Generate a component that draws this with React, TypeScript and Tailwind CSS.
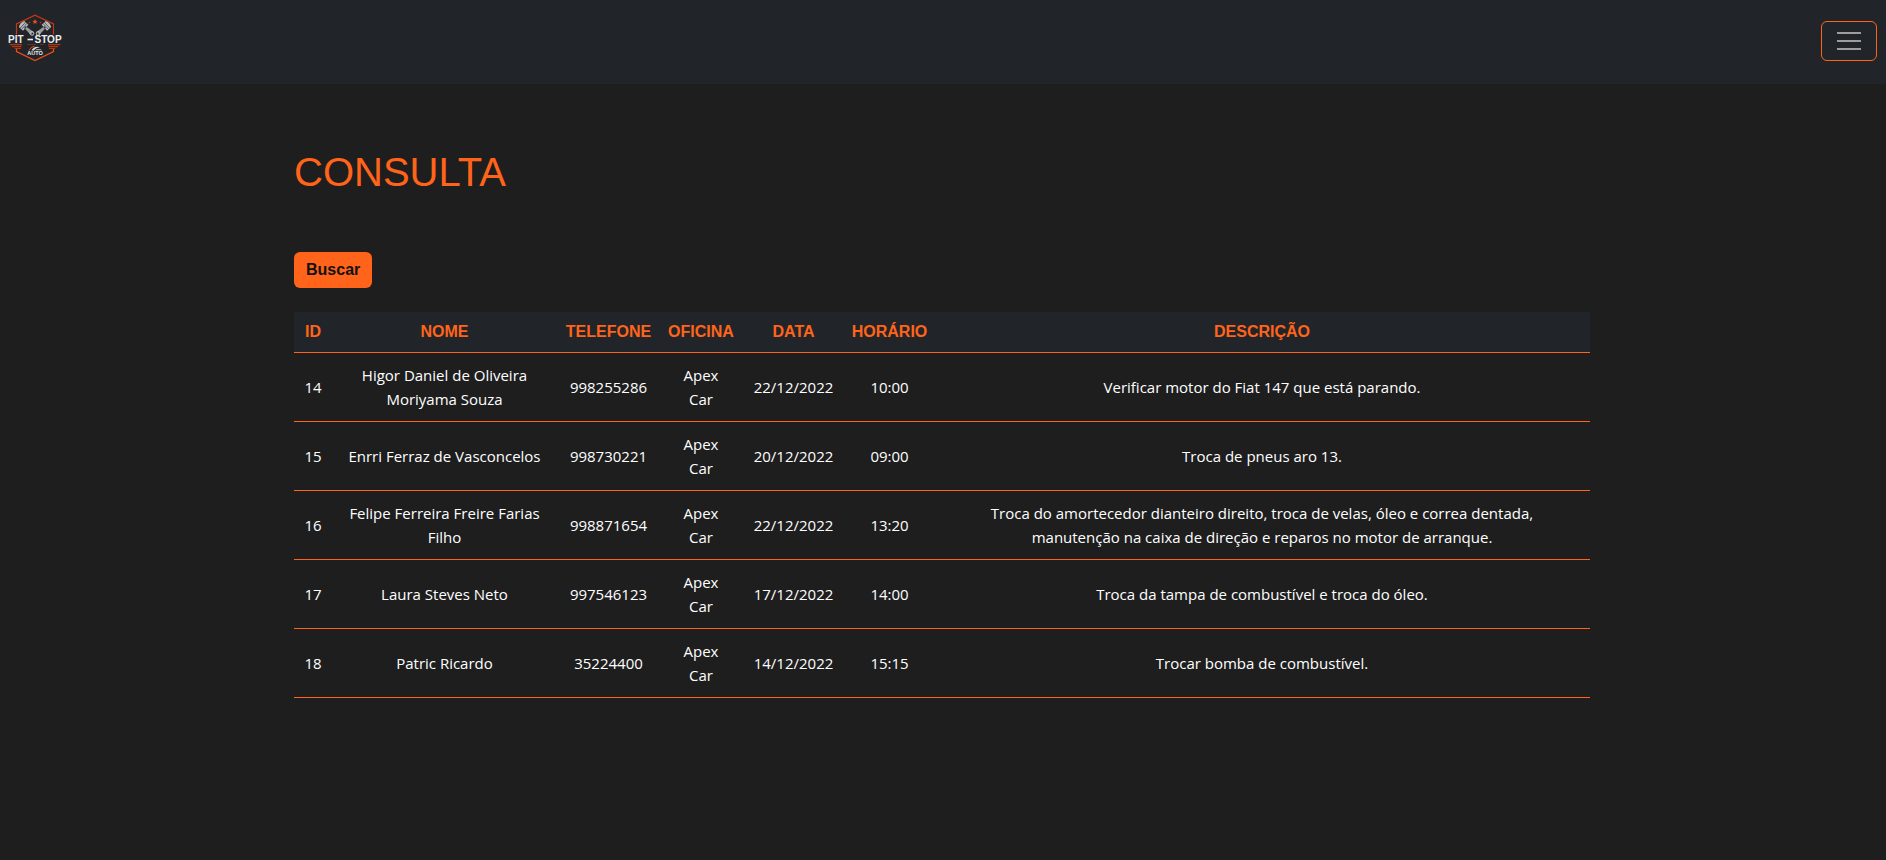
type Booking = {
  id: number;
  name: string;
  phone: string;
  shop: string;
  date: string;
  time: string;
  description: string;
};

const bookings: Booking[] = [
  { id: 14, name: "Higor Daniel de Oliveira Moriyama Souza", phone: "998255286", shop: "Apex Car", date: "22/12/2022", time: "10:00", description: "Verificar motor do Fiat 147 que está parando." },
  { id: 15, name: "Enrri Ferraz de Vasconcelos", phone: "998730221", shop: "Apex Car", date: "20/12/2022", time: "09:00", description: "Troca de pneus aro 13." },
  { id: 16, name: "Felipe Ferreira Freire Farias Filho", phone: "998871654", shop: "Apex Car", date: "22/12/2022", time: "13:20", description: "Troca do amortecedor dianteiro direito, troca de velas, óleo e correa dentada, manutenção na caixa de direção e reparos no motor de arranque." },
  { id: 17, name: "Laura Steves Neto", phone: "997546123", shop: "Apex Car", date: "17/12/2022", time: "14:00", description: "Troca da tampa de combustível e troca do óleo." },
  { id: 18, name: "Patric Ricardo", phone: "35224400", shop: "Apex Car", date: "14/12/2022", time: "15:15", description: "Trocar bomba de combustível." },
];

const headings = ["ID", "NOME", "TELEFONE", "OFICINA", "DATA", "HORÁRIO", "DESCRIÇÃO"];

function Piston() {
  return (
    <g>
      <path d="M-4 -6q4 -2 8 0v5.500h-8z" fill="#b9bbbd" />
      <path d="M-4 -4.200h8M-4 -2.400h8" stroke="#4a4d50" strokeWidth="0.800" />
      <circle cx="0" cy="-0.500" r="1.300" fill="#3c3f42" />
      <path d="M-1.200 0h2.400l.8 8h-4z" fill="#97999b" />
      <circle cx="0" cy="8" r="1.800" fill="none" stroke="#b9bbbd" strokeWidth="1" />
    </g>
  );
}

function Logo() {
  return (
    <svg viewBox="0 0 56 48" className="h-12 w-14" role="img" aria-label="Pit-Stop Auto">
      <g fill="none" strokeWidth="1.200">
        <path d="M8.500 20.500V10L27 1.200L45.500 10V20.500" stroke="#c93712" />
        <path d="M8.500 35V37.500L27 46.500L45.500 37.500V35" stroke="#ee4d16" />
      </g>
      <path d="m27 5.200 .8 1.600 1.800.2-1.300 1.200.3 1.800-1.600-.9-1.600.9.3-1.800-1.300-1.200 1.800-.2z" fill="#f04a18" />
      <circle cx="21.500" cy="8.500" r="0.800" fill="#c93712" />
      <circle cx="32.500" cy="8.500" r="0.800" fill="#c93712" />
      <g transform="translate(18 14) rotate(-48)"><Piston /></g>
      <g transform="translate(36 14) rotate(48)"><Piston /></g>
      <path d="M1 30h13v1.300H2.200zM3.500 32h10v1.300H4.500zM6.500 34h6.500v1H7.200zM53 30H40v1.300h11.800zM50.500 32h-10v1.300h9zM47.500 34H41v1h5.800z" fill="#b5350f" />
      <path d="M19 30.500h9M32 30.500h4" stroke="#8f2f12" strokeWidth="0.700" />
      <g fontSize="10" fontWeight="700" fill="#eceeef" className="font-['Liberation_Sans',sans-serif]">
        <text x="0" y="28.500">PIT</text>
        <text x="26.500" y="28.500">STOP</text>
      </g>
      <path d="M19.500 25.500h5.500" stroke="#eceeef" strokeWidth="1.600" />
      <path d="M21 36.500q1.500-3.800 5.500-4.300" fill="none" stroke="#e2481a" strokeWidth="1" />
      <path d="M23.500 36.500q1.500-3.500 6-3.800l2.500.8q-4-.2-6 3z" fill="#d4d6d8" />
      <path d="M28.500 35h4l1.500 1.300h-6.500z" fill="#97999b" />
      <text x="27" y="41" textAnchor="middle" fontSize="5.500" fontWeight="700" fill="#eceeef" className="font-['Liberation_Sans',sans-serif]">AUTO</text>
    </svg>
  );
}

export default function App() {
  return (
    <div className="min-h-screen bg-[#1e1e1e] font-['Open_Sans','Noto_Sans',sans-serif] text-white">
      <header className="flex h-[84px] items-start justify-between bg-[#212529] pl-2 pr-[9px]">
        <a href="#inicio" className="mt-3.5">
          <Logo />
        </a>
        <button
          type="button"
          aria-label="Abrir menu"
          className="mt-[21px] flex h-10 w-14 items-center justify-center rounded-md border border-[#ff641a]"
        >
          <svg viewBox="0 0 30 30" className="size-[30px]" fill="none" stroke="#9b9d9f" strokeWidth="2">
            <path d="M3 7h24M3 15h24M3 23h24" />
          </svg>
        </button>
      </header>

      <div className="pr-0.5">
        <main className="mx-auto max-w-[1320px] px-3 pt-16">
          <h1 className="font-['Liberation_Sans',Arial,sans-serif] text-[40px] leading-12 text-[#ff641a]">CONSULTA</h1>
          <button
            type="button"
            className="mt-14 block h-9 rounded-md bg-[#ff641a] px-3 font-['Liberation_Sans',Arial,sans-serif] text-base font-bold text-[#121212]"
          >
            Buscar
          </button>

          <table className="mt-6 w-full table-fixed border-collapse text-center">
            <colgroup>
              <col className="w-[38px]" />
              <col className="w-[225px]" />
              <col className="w-[103px]" />
              <col className="w-[82px]" />
              <col className="w-[103px]" />
              <col className="w-[89px]" />
              <col />
            </colgroup>
            <thead className="bg-[#212529] font-['Liberation_Sans',Arial,sans-serif] text-base leading-6 text-[#ff641a]">
              <tr className="border-b border-[#ff641a]">
                {headings.map((heading) => (
                  <th key={heading} scope="col" className="py-2 font-bold">
                    {heading}
                  </th>
                ))}
              </tr>
            </thead>
            <tbody className="text-[15px] leading-6">
              {bookings.map((b) => (
                <tr key={b.id} className="border-b border-[#ff641a]">
                  <td className="py-2.5">{b.id}</td>
                  <td className="p-2.5">{b.name}</td>
                  <td className="py-2.5">{b.phone}</td>
                  <td className="px-4 py-2.5">{b.shop}</td>
                  <td className="py-2.5">{b.date}</td>
                  <td className="py-2.5">{b.time}</td>
                  <td className="px-8 py-2.5">{b.description}</td>
                </tr>
              ))}
            </tbody>
          </table>
        </main>
      </div>
    </div>
  );
}
